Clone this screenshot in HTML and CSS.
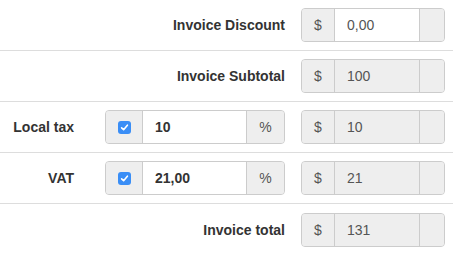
FILE: index.html
```html
<!DOCTYPE html>
<html lang="en">
<head>
  <meta charset="UTF-8" />
  <title>Invoice totals</title>
  <link rel="stylesheet" href="styles.css">
</head>
<body>
  <div class="totals">
    <div class="totals-row">
      <label class="totals-label wide">Invoice Discount</label>
      <div class="input-group amount">
        <span class="addon cur">$</span>
        <input class="field" type="text" value="0,00">
        <span class="addon end"></span>
      </div>
    </div>
    <div class="totals-row">
      <label class="totals-label wide">Invoice Subtotal</label>
      <div class="input-group amount">
        <span class="addon cur">$</span>
        <input class="field" type="text" value="100" disabled>
        <span class="addon end"></span>
      </div>
    </div>
    <div class="totals-row">
      <label class="totals-label">Local tax</label>
      <div class="input-group rate">
        <span class="addon check"><span class="checkbox"><svg width="9" height="9" viewBox="0 0 9 9"><path d="M1.6 4.8 L3.6 6.7 L7.4 2.2" fill="none" stroke="#fff" stroke-width="1.6" stroke-linecap="round" stroke-linejoin="round"/></svg></span></span>
        <input class="field bold" type="text" value="10">
        <span class="addon pct">%</span>
      </div>
      <div class="input-group amount">
        <span class="addon cur">$</span>
        <input class="field" type="text" value="10" disabled>
        <span class="addon end"></span>
      </div>
    </div>
    <div class="totals-row">
      <label class="totals-label">VAT</label>
      <div class="input-group rate">
        <span class="addon check"><span class="checkbox"><svg width="9" height="9" viewBox="0 0 9 9"><path d="M1.6 4.8 L3.6 6.7 L7.4 2.2" fill="none" stroke="#fff" stroke-width="1.6" stroke-linecap="round" stroke-linejoin="round"/></svg></span></span>
        <input class="field bold" type="text" value="21,00">
        <span class="addon pct">%</span>
      </div>
      <div class="input-group amount">
        <span class="addon cur">$</span>
        <input class="field" type="text" value="21" disabled>
        <span class="addon end"></span>
      </div>
    </div>
    <div class="totals-row last">
      <label class="totals-label wide">Invoice total</label>
      <div class="input-group amount">
        <span class="addon cur">$</span>
        <input class="field" type="text" value="131" disabled>
        <span class="addon end"></span>
      </div>
    </div>
  </div>
</body>
</html>
```

FILE: styles.css
```css
* { box-sizing: border-box; margin: 0; padding: 0; }
body {
  background: #fff;
  font-family: "Liberation Sans", Arial, sans-serif;
  font-size: 14px;
  color: #333;
}
.totals {
  width: 453px;
}
.totals-row {
  display: grid;
  grid-template-columns: 97px 196px 160px;
  align-items: center;
  height: 51px;
  border-bottom: 1px solid #ddd;
}
.totals-row.last { border-bottom: none; }
.totals-label {
  font-weight: 700;
  text-align: right;
  padding-right: 23px;
}
.totals-label.wide {
  grid-column: 1 / 3;
  padding-right: 8px;
}
.input-group {
  display: flex;
  height: 34px;
  border: 1px solid #ccc;
  border-radius: 4px;
  overflow: hidden;
  background: #eee;
}
.input-group.rate { margin-left: 8px; width: 180px; }
.input-group.amount { margin-left: 8px; width: 144px; grid-column: 3; }
.addon {
  display: flex;
  align-items: center;
  justify-content: center;
  background: #eee;
  color: #555;
}
.addon.cur { width: 32px; }
.addon.end { width: 25px; border-left: 1px solid #ccc; }
.addon.check { width: 36px; }
.addon.pct { width: 38px; border-left: 1px solid #ccc; }
.field {
  flex: 1;
  min-width: 0;
  border: none;
  border-left: 1px solid #ccc;
  padding: 0 12px;
  font: inherit;
  color: #555;
  background: #fff;
  outline: none;
}
.field:disabled { background: #eee; color: #555; }
.field.bold { font-weight: 700; color: #333; }
.checkbox {
  display: flex;
  align-items: center;
  justify-content: center;
  width: 13px;
  height: 13px;
  border-radius: 3px;
  background: #3a8ef6;
}
```
